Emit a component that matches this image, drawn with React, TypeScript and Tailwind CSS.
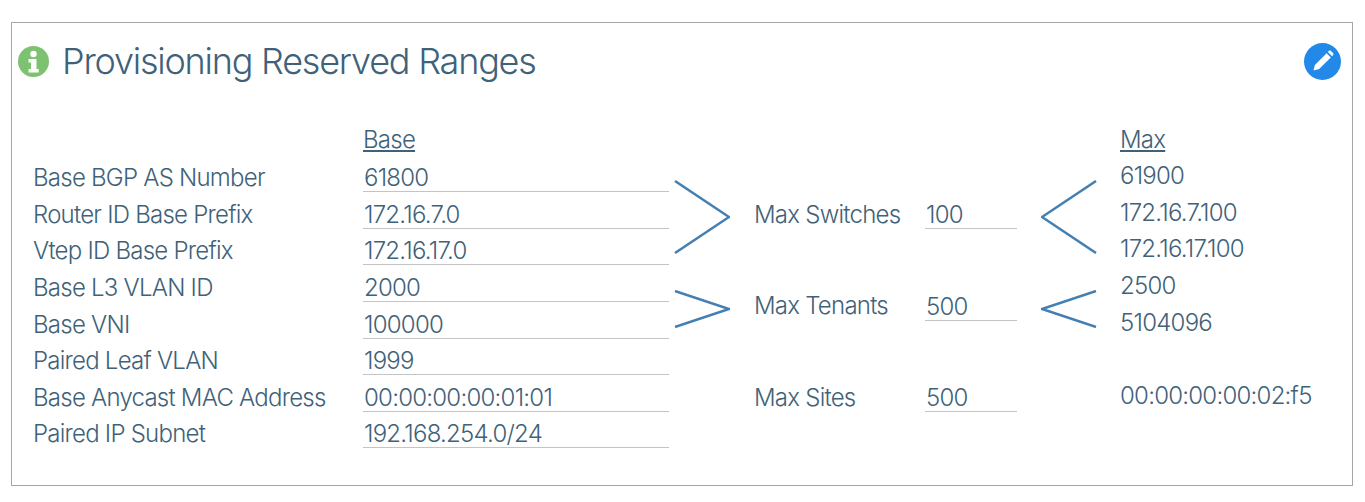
const rows = [
  { label: "Base BGP AS Number", base: "61800", max: "61900" },
  { label: "Router ID Base Prefix", base: "172.16.7.0", max: "172.16.7.100" },
  { label: "Vtep ID Base Prefix", base: "172.16.17.0", max: "172.16.17.100" },
  { label: "Base L3 VLAN ID", base: "2000", max: "2500" },
  { label: "Base VNI", base: "100000", max: "5104096" },
  { label: "Paired Leaf VLAN", base: "1999", max: "" },
  { label: "Base Anycast MAC Address", base: "00:00:00:00:01:01", max: "00:00:00:00:02:f5" },
  { label: "Paired IP Subnet", base: "192.168.254.0/24", max: "" },
]

const Chevron = ({ dir, height }: { dir: "right" | "left"; height: number }) => {
  const points = dir === "right" ? `1,1 55,${height / 2} 1,${height - 1}` : `55,1 1,${height / 2} 55,${height - 1}`
  return (
    <svg width="56" height={height} viewBox={`0 0 56 ${height}`} fill="none">
      <polyline points={points} stroke="#437fb2" strokeWidth="2.5" />
    </svg>
  )
}

const InfoIcon = () => (
  <svg width="31" height="31" viewBox="0 0 31 31">
    <circle cx="15.5" cy="15.5" r="15.5" fill="#7dc270" />
    <circle cx="15.5" cy="8" r="3.2" fill="#fff" />
    <path d="M10.5 13h8v10h2.2v3.4H10.5V23h2.5v-6.6h-2.5z" fill="#fff" />
  </svg>
)

const PencilIcon = () => (
  <svg width="22" height="22" viewBox="0 0 22 22">
    <path d="M1.5 20.5l1.4-5.6L14.6 3.2l4.2 4.2L7.1 19.1z" fill="#fff" />
    <path d="M15.8 2l1-1c.6-.6 1.5-.6 2.1 0l2.1 2.1c.6.6.6 1.5 0 2.1l-1 1z" fill="#fff" />
  </svg>
)

export default function App() {
  return (
    <div className="min-h-[502px] bg-white pt-[22px] pl-[11px] font-['Inter',sans-serif] text-[#3f6279]">
      <div className="w-[1342px] h-[464px] border border-[#a6a6a6]">
        <div className="flex items-center justify-between pl-[6px] pr-[11px] pt-[18px]">
          <div className="flex items-center gap-[13px]">
            <InfoIcon />
            <h1 className="text-[36px] leading-[40px] tracking-[-1.22px] font-light">Provisioning Reserved Ranges</h1>
          </div>
          <div className="w-[37px] h-[37px] rounded-full bg-[#2389e8] flex items-center justify-center">
            <PencilIcon />
          </div>
        </div>

        <div className="mt-[38px] ml-[21px] grid grid-cols-[330px_306px_5px_56px_24px_171px_92px_24px_56px_23px_1fr] grid-rows-[repeat(9,36.6px)] text-[24px] font-light tracking-[-0.76px]">
          <div className="col-start-2 row-start-1 underline self-end leading-[30px] pb-[1px]">Base</div>
          <div className="col-start-11 row-start-1 underline self-end leading-[30px] pb-[1px]">Max</div>

          {rows.map((row, i) => (
            <div key={row.label} className="contents">
              <div className="col-start-1 self-end leading-[28px]" style={{ gridRowStart: i + 2 }}>
                {row.label}
              </div>
              <div
                className="col-start-2 border-b border-[#c4c4c4] flex items-end leading-[26px] pl-[1px]"
                style={{ gridRowStart: i + 2 }}
              >
                {row.base}
              </div>
              {row.max && (
                <div className="col-start-11 self-end leading-[30px] pb-[1px]" style={{ gridRowStart: i + 2 }}>
                  {row.max}
                </div>
              )}
            </div>
          ))}

          <div className="col-start-4 row-start-2 row-span-3 flex items-center pt-[14px]">
            <Chevron dir="right" height={74} />
          </div>
          <div className="col-start-4 row-start-5 row-span-2 flex items-center pt-[14px]">
            <Chevron dir="right" height={38} />
          </div>
          <div className="col-start-9 row-start-2 row-span-3 flex items-center pt-[14px]">
            <Chevron dir="left" height={74} />
          </div>
          <div className="col-start-9 row-start-5 row-span-2 flex items-center pt-[14px]">
            <Chevron dir="left" height={38} />
          </div>

          <div className="col-start-6 row-start-3 self-end leading-[28px]">Max Switches</div>
          <div className="col-start-7 row-start-3 border-b border-[#c4c4c4] flex items-end leading-[26px] pl-[1px]">100</div>
          <div className="col-start-6 row-start-5 row-span-2 self-center leading-[30px] pt-[9px]">Max Tenants</div>
          <div className="col-start-7 row-start-5 row-span-2 h-[38px] self-center border-b border-[#c4c4c4] flex items-end leading-[26px] pl-[1px]">
            500
          </div>
          <div className="col-start-6 row-start-8 self-end leading-[28px]">Max Sites</div>
          <div className="col-start-7 row-start-8 border-b border-[#c4c4c4] flex items-end leading-[26px] pl-[1px]">
            500
          </div>
        </div>
      </div>
    </div>
  )
}
